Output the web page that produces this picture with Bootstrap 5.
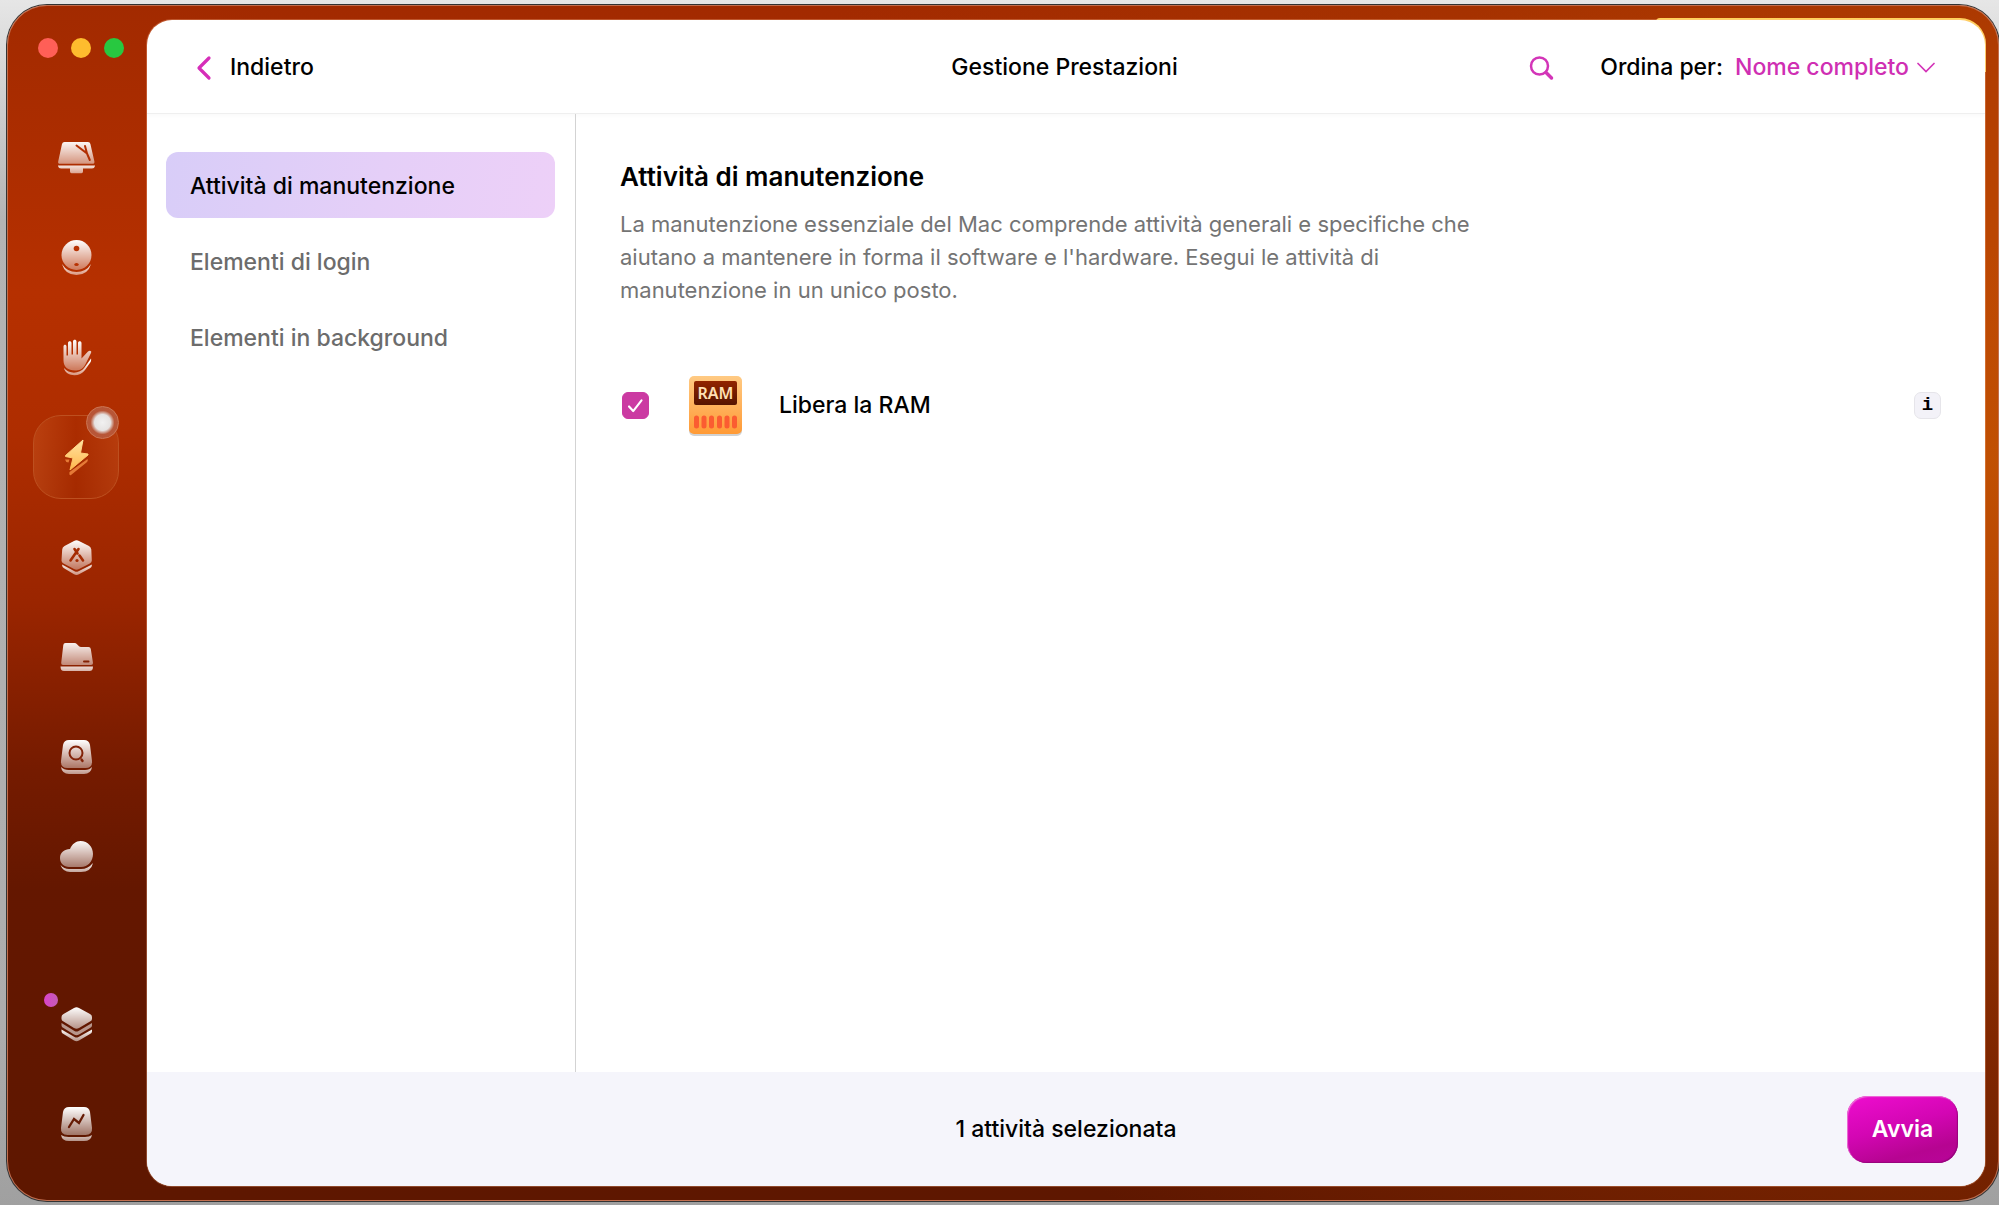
<!DOCTYPE html>
<html lang="it">
<head>
<meta charset="utf-8">
<meta name="viewport" content="width=device-width, initial-scale=1">
<title>Gestione Prestazioni</title>
<link href="https://cdn.jsdelivr.net/npm/bootstrap@5.3.0/dist/css/bootstrap.min.css" rel="stylesheet">
<style>
:root { --accent: #cf2fb3; --ui-font: Inter, Roboto, "Liberation Sans", sans-serif; }
body { font-family: var(--ui-font); font-size: 23px; line-height: 33px; color: #000; background: linear-gradient(180deg, #e6e6e6 0, #b4b4b4 220px, #adadad 85%, #a0a0a0 100%); }
.desk { min-height: 100vh; padding: 5px 0 4px 7px; }
.app-window { position: relative; border-radius: 40px; padding: 15px 14px 15px 0; box-shadow: 0 0 0 1px #333, inset 0 0 0 1px #c26f4f;
  background: radial-gradient(ellipse 65% 85% at 100% 38%, rgba(196,86,4,.85), rgba(170,60,0,.4) 60%, transparent), linear-gradient(180deg, #a22a00 0, #b63000 24%, #ae2d00 36%, #9a2500 50%, #751b00 64%, #641700 74%, #5e1700 100%); }
.app-window::before { content: ""; position: absolute; right: 13px; top: 13px; width: 330px; height: 54px; border-radius: 4px 26px 0 0; background: #ffd35a; }
.rail { width: 140px; padding-bottom: 20px; }
.lights { gap: 13px; padding: 18px 0 0 31px; height: 95px; }
.lights button { width: 20px; height: 20px; border: 0; padding: 0; border-radius: 50%; }
.l-close { background: #ff5f57; } .l-min { background: #febc2e; } .l-max { background: #28c840; }
.rail-list { gap: 16px; padding-right: 3px; }
.rail-btn { width: 86px; height: 84px; padding: 0; border: 1px solid transparent; border-radius: 28px; background: none; position: relative; }
.rail-btn svg { width: 40px; height: 40px; }
.rail-btn.on { border-color: #bd5020; background: linear-gradient(90deg, rgba(220,120,60,.25), rgba(150,40,0,.15) 50%, rgba(220,120,60,.2)); }
.knob { position: absolute; right: -1px; top: -10px; width: 33px; height: 33px; border-radius: 50%; border: 1px solid #cc7655; background: radial-gradient(circle, #f1f1f1 0, #e6e3e2 8px, rgba(184,88,58,.95) 12px); }
.news { position: absolute; left: 10px; top: 10px; width: 14px; height: 14px; border-radius: 50%; background: linear-gradient(90deg, #d944c9, #c35db5); }
.panel { position: relative; background: #fff; border-radius: 25px; overflow: hidden; box-shadow: 0 0 0 1px rgba(255,190,150,.3); }
.top-bar { height: 94px; padding: 2px 50px 0 47px; border-bottom: 1px solid #efefef; box-shadow: 0 2px 4px rgba(0,0,0,.025); }
.med { font-weight: 500; }
.page-name { font-size: 23px; line-height: 33px; }
.plain { border: 0; background: none; padding: 0; color: inherit; }
.search { margin-right: 46px; }
.sort { border: 0; background: none; appearance: none; color: var(--accent); font-weight: 500; padding: 0; }
.side { width: 429px; border-right: 1px solid #d3d3d3; padding: 38px 20px 38px 19px; gap: 10px; }
.side-link { display: flex; align-items: center; height: 66px; padding: 2px 24px 0; border-radius: 12px; color: #6c6c6c; text-decoration: none; font-weight: 500; }
.side-link.on { color: #000; background: linear-gradient(100deg, #d8cdf8, #e5cff8 55%, #edd0f8); }
.main { padding: 43px 44px 40px 44px; }
.main h2 { font-size: 26px; line-height: 40px; font-weight: 600; margin: 0; }
.intro { max-width: 880px; font-size: 22px; color: #747474; padding-top: 11px; margin-bottom: 65px; }
.task { padding-left: 2px; }
.task-check.form-check-input { width: 27px; height: 27px; margin: 0; border-radius: 6px; }
.task-check.form-check-input:checked { background-color: #cb3aa2; border-color: #cb3aa2; background-image: url("data:image/svg+xml,%3Csvg xmlns='http://www.w3.org/2000/svg' viewBox='0 0 27 27'%3E%3Cpath d='M6.500 14.500l4.500 5L20 8' fill='none' stroke='%23fff' stroke-width='2.300' stroke-linecap='round' stroke-linejoin='round'/%3E%3C/svg%3E"); }
.info { width: 27px; height: 27px; border-radius: 7px; border: 1px solid #e6e5ea; background: #f3f2f8; font: bold 19px/24px "Liberation Mono", monospace; padding: 0; }
.foot { background: #f5f5fb; height: 114px; padding: 0 27px; }
.run { width: 111px; height: 67px; border: 0; border-radius: 20px; color: #fff; font-weight: 600; background: linear-gradient(165deg, #ee0dcf, #d306b3 45%, #b60491 78%, #b9059a); box-shadow: inset 1px 1px 1px #ee72d8, inset -1px -1px 1px #96057c; }
</style>
</head>
<body>
<div class="desk d-flex">
 <div class="app-window d-flex flex-grow-1">
  <nav class="rail d-flex flex-column flex-shrink-0" aria-label="Moduli">
   <div class="lights d-flex"><button class="l-close" aria-label="Chiudi"></button><button class="l-min" aria-label="Riduci"></button><button class="l-max" aria-label="Ingrandisci"></button></div>
   <svg width="0" height="0" class="position-absolute" aria-hidden="true"><defs>
     <linearGradient id="w" gradientUnits="userSpaceOnUse" x1="0" y1="3" x2="0" y2="32"><stop stop-color="#fff"/><stop offset="1" stop-color="#fff" stop-opacity=".38"/></linearGradient>
     <linearGradient id="b" gradientUnits="userSpaceOnUse" x1="0" y1="25" x2="0" y2="38"><stop stop-color="#fff"/><stop offset="1" stop-color="#fff" stop-opacity=".5"/></linearGradient>
     <linearGradient id="y" x1="0" y1="0" x2="0" y2="1"><stop stop-color="#ffe3a0"/><stop offset="1" stop-color="#ffb84e"/></linearGradient>
   </defs></svg>
   <div class="rail-list d-flex flex-column align-items-center">
    <button class="rail-btn" aria-label="Panoramica"><svg viewBox="0 0 40 40"><path fill="url(#w)" d="M8.5 5h23.500q2 0 2.400 2l4 17.500q.4 2.300-2 2.300H4Q1.700 26.800 2.200 24.500L6 7q.5-2 2.500-2z"/><path fill="url(#b)" d="M2 28.500h37v.5q-.6 2.500-3 2.500h-9v3q0 1.700-1.500 1.700h-10q-1.500 0-1.500-1.700v-3H5q-2.400 0-3-2.500z"/><path d="M20.500 8.500l10.500 8 2.800 6.500M29 9l2 7.500" fill="none" stroke="#b22f03" stroke-width="2" stroke-linecap="round"/></svg></button>
    <button class="rail-btn" aria-label="Pulizia"><svg viewBox="0 0 40 40"><circle cx="20.500" cy="18" r="15" fill="url(#w)"/><path fill="url(#b)" d="M6 27q5 8 14.500 8T35 27q-3 11-14.500 11T6 27z"/><circle cx="20.500" cy="11.500" r="2.800" fill="#b83203"/><ellipse cx="20.500" cy="27.500" rx="2.200" ry="1.500" fill="#b83203"/></svg></button>
    <button class="rail-btn" aria-label="Protezione"><svg viewBox="0 0 40 40"><path fill="url(#w)" d="M7.500 9.500c0-2.500 3-2.500 3 0v9h1.500V6c0-2.500 3.500-2.500 3.500 0v11.500H17V4.500c0-2.500 3.500-2.500 3.500 0v13H22V6c0-2.500 3.500-2.500 3.500 0v15.500l6.500-7c1.800-1.400 4-.5 3 1.500l-6 12c-2.500 4.500-6 5.500-10 5.500-7 0-11.500-3.500-11.500-10z"/><path fill="url(#b)" d="M8 31c5 6.500 16 6 20.500-.5l6.500-9q.5 2-.7 4L29 33c-5 7.500-19 7-21-2z"/></svg></button>
    <button class="rail-btn on" aria-label="Prestazioni"><svg viewBox="0 0 40 40"><path fill="url(#y)" stroke="url(#y)" stroke-linejoin="round" d="M27 3L9.500 18.500v1l7.500 1.500-3 12 18-15v-1L24.500 16z"/><path fill="#ff9b4f" fill-opacity=".7" d="M9 22.500h4.500l-1 3q-3-.3-3.500-3zM13.500 35L31.500 22q1 2-1 3.500L15 38q-2 1-1.500-3z"/></svg><span class="knob"></span></button>
    <button class="rail-btn" aria-label="Applicazioni"><svg viewBox="0 0 40 40"><path fill="url(#w)" d="M18 4q2.500-1.600 5 0l10 5q2 1 2.300 3.500l.5 11q0 2-2 3L23 32q-2.500 1.600-5 0L7.500 26.500q-2-1-2-3l.7-11Q6.300 10 8.500 9z"/><path fill="url(#b)" d="M6 27.500l12.500 6.700q2 1 4 0L36 27.500q0 2.500-2 3.700l-11 6q-2.500 1.500-5 0l-10-6q-2-1.200-2-3.700z"/><path d="M18.500 12l3 4.500M22.500 12l-8 11.500M23.500 18.500l3.500 5" fill="none" stroke="#a52b03" stroke-width="2.600" stroke-linecap="round"/><circle cx="21" cy="23.500" r="1.600" fill="#a52b03"/></svg></button>
    <button class="rail-btn" aria-label="File"><svg viewBox="0 0 40 40"><path fill="url(#w)" d="M9.500 6h9q1.500 0 2.500 1.200l2 2q.8.8 2 .8h7.500q2 0 2.300 2L37 26q0 2-2 2H7q-2 0-1.800-2L7.300 8q.2-2 2.200-2z"/><path fill="url(#b)" d="M4.500 29.500H37q0 4.500-3.500 4.500H8q-3.500 0-3.500-4.500z"/><path d="M28 24.500h4.500" stroke="#842204" stroke-width="2" stroke-linecap="round"/></svg></button>
    <button class="rail-btn" aria-label="Ricerca"><svg viewBox="0 0 40 40"><path fill="url(#w)" d="M13 3h15q5 0 6 5l2 16q.5 7-6.500 7h-18Q4.500 31 5 24L7 8q1-5 6-5z"/><path fill="url(#b)" d="M5 30q3 3 7.500 3H29q4.500 0 7-3-1 7-8 7H13q-7 0-8-7z"/><circle cx="20" cy="16" r="6.500" fill="none" stroke="#822207" stroke-width="2"/><path d="M25.500 22.500l1 1.500" stroke="#822207" stroke-width="2.300" stroke-linecap="round"/></svg></button>
    <button class="rail-btn" aria-label="Cloud"><svg viewBox="0 0 40 40"><path fill="url(#w)" d="M14 12C16 7 20 4 24.500 4 32 4 37 10 37 17S32 30 25 30H13C8 30 4 26.500 4 21s4.500-9 10-9z"/><path fill="url(#b)" d="M4.500 28q3.500 4 8.500 4h12q7 0 12-6-2 9-12 9H14q-7 0-9.500-7z"/></svg></button>
   </div>
   <div class="rail-list d-flex flex-column align-items-center mt-auto">
    <button class="rail-btn" aria-label="Livelli"><span class="news"></span><svg viewBox="0 0 40 40"><path fill="url(#w)" d="M18 4q2.500-1.500 5 0l11 6q2 1 2 3v2q0 1.500-2 2.500l-11 6.500q-2.500 1.500-5 0L7.500 17.500q-2-1-2-2.500v-2q0-2 2-3z"/><path fill="#fff" fill-opacity=".55" d="M5.500 19l13 8q2 1 4 0L36 19v2.500q0 1.500-2 2.500l-11 6.500q-2.500 1.500-5 0L7.500 24q-2-1-2-2.500z"/><path fill="url(#b)" d="M5.500 25.500l13 7.500q2 1 4 0L36 25.500v2q0 1.500-2 2.500l-11 6.500q-2.500 1.500-5 0L7.500 30q-2-1-2-2.500z"/></svg></button>
    <button class="rail-btn" aria-label="Statistiche"><svg viewBox="0 0 40 40"><path fill="url(#w)" d="M13 3h15q5 0 6 5l2 16q.5 7-6.500 7h-18Q4.500 31 5 24L7 8q1-5 6-5z"/><path fill="url(#b)" d="M5 31q3 2 7.500 2H29q4.500 0 7-2-1 6-8 6H13q-7 0-8-6z"/><path d="M13 23l5-8 5 4 4.500-8" fill="none" stroke="#661b05" stroke-width="2.300" stroke-linecap="round"/></svg></button>
   </div>
  </nav>
  <div class="panel d-flex flex-column flex-grow-1">
   <header class="top-bar d-flex align-items-center">
    <div class="col d-flex"><button class="plain med d-flex align-items-center"><svg width="36" height="26" viewBox="0 0 36 26" class="flex-shrink-0" aria-hidden="true"><path d="M15 3L5 13l10 10" fill="none" stroke="#d62eb9" stroke-width="3.200" stroke-linecap="round" stroke-linejoin="round"/></svg>Indietro</button></div>
    <h1 class="page-name med m-0">Gestione Prestazioni</h1>
    <div class="col d-flex align-items-center justify-content-end">
     <button class="plain search d-flex" aria-label="Cerca"><svg width="26" height="26" viewBox="0 0 26 26"><circle cx="11.500" cy="11" r="8.500" fill="none" stroke="#d335b8" stroke-width="2.500"/><path d="M18 17.500l5.500 5.500" stroke="#d335b8" stroke-width="3.500" stroke-linecap="round"/></svg></button>
     <label for="sort" class="med me-2 pe-1">Ordina per:</label>
     <select id="sort" class="sort"><option>Nome completo</option></select>
     <svg width="18" height="12" viewBox="0 0 18 12" class="ms-2" aria-hidden="true"><path d="M1 1.500l8 8 8-8" fill="none" stroke="#d335b8" stroke-width="1.700" stroke-linecap="round"/></svg>
    </div>
   </header>
   <div class="d-flex flex-grow-1">
    <nav class="side d-flex flex-column flex-shrink-0" aria-label="Categorie">
     <a href="#" class="side-link on" aria-current="page">Attività di manutenzione</a>
     <a href="#" class="side-link">Elementi di login</a>
     <a href="#" class="side-link">Elementi in background</a>
    </nav>
    <main class="main flex-grow-1">
     <h2>Attività di manutenzione</h2>
     <p class="intro">La manutenzione essenziale del Mac comprende attività generali e specifiche che aiutano a mantenere in forma il software e l'hardware. Esegui le attività di manutenzione in un unico posto.</p>
     <div class="task d-flex align-items-center">
      <input class="form-check-input task-check" type="checkbox" id="ram" checked>
      <label for="ram" class="med d-flex align-items-center">
       <svg width="130" height="66" viewBox="0 0 130 66" aria-hidden="true"><defs><linearGradient id="r1" x1="0" y1="0" x2="0" y2="1"><stop stop-color="#ffca83"/><stop offset="1" stop-color="#ff9a35"/></linearGradient><linearGradient id="r2" x1="0" y1="0" x2="0" y2="1"><stop stop-color="#922400"/><stop offset="1" stop-color="#561400"/></linearGradient></defs>
        <rect x="40" y="5" width="53" height="59" rx="5" fill="#000" opacity=".18"/><rect x="40" y="4" width="53" height="58" rx="5" fill="url(#r1)"/><rect x="45" y="9" width="43" height="24" rx="2" fill="url(#r2)"/>
        <text x="66.500" y="27" text-anchor="middle" font-family="Noto Sans, sans-serif" font-weight="600" font-size="16" fill="#ffe0b4">RAM</text>
        <path d="M47.500 46v8M55 46v8M62.500 46v8M70.500 46v8M78 46v8M85.500 46v8" stroke="#fb5c31" stroke-width="5" stroke-linecap="round"/></svg>
       Libera la RAM</label>
      <button class="info ms-auto" aria-label="Informazioni">i</button>
     </div>
    </main>
   </div>
   <footer class="foot d-flex align-items-center">
    <div class="col"></div><div class="med">1 attività selezionata</div><div class="col d-flex justify-content-end"><button class="run">Avvia</button></div>
   </footer>
  </div>
 </div>
</div>
<script src="https://cdn.jsdelivr.net/npm/bootstrap@5.3.0/dist/js/bootstrap.bundle.min.js"></script>
</body>
</html>
